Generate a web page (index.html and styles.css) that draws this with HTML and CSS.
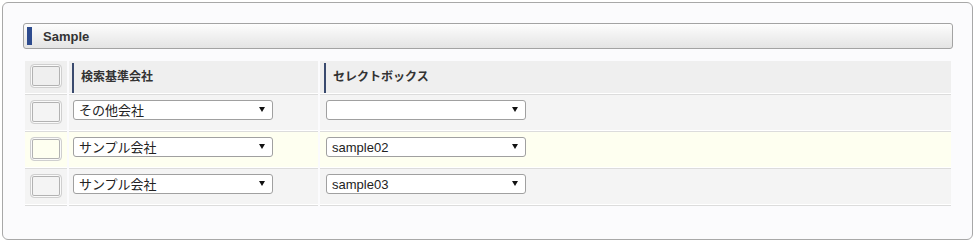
FILE: index.html
```html
<!DOCTYPE html>
<html>
  <head>
    <meta charset="UTF-8" />
    <title>Sample</title>
    <link rel="stylesheet" href="styles.css">
  </head>
  <body>
    <div class="panel">
      <div class="panel-title"><span class="mark"></span>Sample</div>
      <table class="grid">
        <tr class="head">
          <td class="sel-col"><div class="box"></div></td>
          <td class="col-a"><div class="th">検索基準会社</div></td>
          <td class="col-b"><div class="th">セレクトボックス</div></td>
        </tr>
        <tr class="odd">
          <td class="sel-col"><div class="box"></div></td>
          <td class="col-a"><label class="pick"><select><option>その他会社</option></select></label></td>
          <td class="col-b"><label class="pick"><select><option></option></select></label></td>
        </tr>
        <tr class="even">
          <td class="sel-col"><div class="box"></div></td>
          <td class="col-a"><label class="pick"><select><option>サンプル会社</option></select></label></td>
          <td class="col-b"><label class="pick"><select><option>sample02</option></select></label></td>
        </tr>
        <tr class="odd">
          <td class="sel-col"><div class="box"></div></td>
          <td class="col-a"><label class="pick"><select><option>サンプル会社</option></select></label></td>
          <td class="col-b"><label class="pick"><select><option>sample03</option></select></label></td>
        </tr>
      </table>
    </div>
  </body>
</html>
```

FILE: styles.css
```css
* {
  box-sizing: border-box;
}
body {
  margin: 0;
  padding: 2px;
  background-color: #ffffff;
  font-family: "Liberation Sans", "Noto Sans CJK JP", sans-serif;
  color: #222222;
}
.panel {
  width: 971px;
  height: 238px;
  border: 1px solid #a8a8a8;
  border-radius: 6px;
  background-color: #fbfbfd;
  padding: 20px 19px 0 20px;
}
.panel-title {
  display: flex;
  align-items: center;
  height: 26px;
  border: 1px solid #a3a3a3;
  border-radius: 3px;
  background: linear-gradient(#fdfdfd, #e4e4e4);
  padding-left: 3px;
  font-size: 13px;
  font-weight: bold;
  color: #333333;
}
.mark {
  width: 5px;
  height: 18px;
  background-color: #2d4b8e;
  margin-right: 11px;
}
.grid {
  width: 930px;
  margin-top: 12px;
  border-collapse: separate;
  border-spacing: 2px 0;
}
.grid td {
  padding: 0;
  vertical-align: top;
  border-bottom: 1px solid #dcdcdc;
  box-shadow: inset 0 -1px 0 #ffffff;
}
.head td {
  height: 34px;
  background-color: #efefef;
}
.odd td {
  height: 37px;
  background-color: #f4f4f4;
}
.even td {
  height: 37px;
  background-color: #fefff0;
}
.sel-col {
  width: 42px;
}
.col-a {
  width: 249px;
}
.box {
  width: 32px;
  height: 24px;
  margin: 5px 0 0 5px;
  border: 1px solid #cfcfcf;
  border-radius: 4px;
  box-shadow: inset 0 0 0 1px #fafafa, inset 0 0 0 2px #b2b2b2;
}
.head .box {
  margin-top: 3px;
}
.th {
  margin: 2px 0 0 3px;
  height: 30px;
  border-left: 2px solid #3a4a6e;
  padding: 4px 0 0 7px;
  font-size: 12px;
  font-weight: bold;
  color: #333333;
}
.col-b .th {
  margin-left: 4px;
}
.pick {
  position: relative;
  display: block;
  width: 200px;
  margin: 5px 0 0 4px;
}
.col-b .pick {
  margin-left: 6px;
}
.pick select {
  appearance: none;
  -webkit-appearance: none;
  width: 200px;
  height: 20px;
  border: 1px solid #a0a0a0;
  border-radius: 3px;
  background-color: #ffffff;
  padding: 0 0 0 5px;
  font-family: "Liberation Sans", "Noto Sans CJK JP", sans-serif;
  font-size: 13px;
  color: #222222;
}
.pick::after {
  content: "";
  position: absolute;
  right: 8px;
  top: 7px;
  border-left: 3px solid transparent;
  border-right: 3px solid transparent;
  border-top: 5px solid #111111;
}
```
